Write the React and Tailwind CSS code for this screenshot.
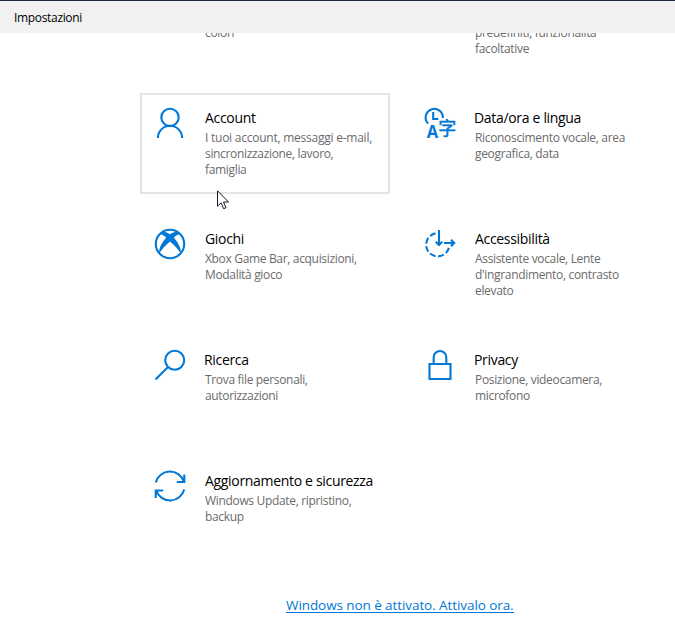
const stroke = { fill: 'none', stroke: '#0078d7', strokeWidth: 2.1 };

const AccountIcon = () => (
  <svg viewBox="0 0 32 32" className="size-8" {...stroke}>
    <circle cx="16" cy="10.4" r="8.7" />
    <path d="M3.900 31a12.100 12.200 0 0 1 24.200 0" />
  </svg>
);

const TimeLanguageIcon = () => (
  <svg viewBox="0 0 32 32" className="size-8 overflow-visible" {...stroke}>
    <path d="M4.200 16.600A8.600 8.600 0 1 1 18.800 11.200" />
    <path d="M9.200 5v7h5.200" />
    <g fill="#0078d7">
      <text x="2.800" y="31" fontSize="18.500" textLength="11.400" lengthAdjust="spacingAndGlyphs" stroke="none" className="font-['Open_Sans',sans-serif] font-bold">A</text>
      <text x="14.200" y="28.300" fontSize="18" strokeWidth="0.500" className="font-['Noto_Sans_CJK_SC',sans-serif] font-normal">字</text>
    </g>
  </svg>
);

const XboxIcon = () => (
  <svg viewBox="0 0 32 32" className="size-8" {...stroke}>
    <circle cx="16" cy="16" r="14.200" />
    <path
      fill="#0078d7"
      stroke="none"
      d="M7 4.200C10 3.200 13.500 4.600 16 6.200C18.500 4.600 22 3.200 25 4.200L26.500 6.200C24.500 5.800 22 7.200 19.800 9.500C23.400 13.600 27.500 20 26.800 25.500C24.500 21.500 20 16.800 16 13.500C12 16.800 7.500 21.500 5.200 25.500C4.500 20 8.600 13.600 12.200 9.500C10 7.200 7.500 5.800 5.500 6.200Z"
    />
  </svg>
);

const EaseIcon = () => (
  <svg viewBox="0 0 32 32" className="size-8" {...stroke}>
    <path d="M11.500 5.400A11.600 11.600 0 1 0 25 19.500" strokeDasharray="6 2.600" />
    <path d="M15 2v15M11.800 13.800l3.200 3.200 3.200-3.200M20 15h10M27 11.800 30.200 15 27 18.200" />
  </svg>
);

const SearchIcon = () => (
  <svg viewBox="0 0 32 32" className="size-8" {...stroke}>
    <circle cx="20.700" cy="11.300" r="9.500" />
    <path d="M14 18 1.500 30.500" />
  </svg>
);

const LockIcon = () => (
  <svg viewBox="0 0 32 32" className="size-8" {...stroke}>
    <path d="M5.500 15h21v15h-21zM9.700 15V8.200a6.300 6.200 0 0 1 12.600 0V15" />
  </svg>
);

const SyncIcon = () => (
  <svg viewBox="0 0 32 32" className="size-8" {...stroke}>
    <path d="M1.800 12.500A14.600 14.600 0 0 1 29.800 11.500M30.300 4.500V12h-7.500M30.200 19.500A14.600 14.600 0 0 1 2.200 20.500M1.700 28v-7.500h7.500" />
  </svg>
);

const items = [
  { title: 'Account', Icon: AccountIcon, active: true, lines: ['I tuoi account, messaggi e-mail,', 'sincronizzazione, lavoro,', 'famiglia'] },
  { title: 'Data/ora e lingua', Icon: TimeLanguageIcon, nudge: true, lines: ['Riconoscimento vocale, area', 'geografica, data'] },
  { title: 'Giochi', Icon: XboxIcon, lines: ['Xbox Game Bar, acquisizioni,', 'Modalità gioco'] },
  { title: 'Accessibilità', Icon: EaseIcon, lines: ['Assistente vocale, Lente', "d'ingrandimento, contrasto", 'elevato'] },
  { title: 'Ricerca', Icon: SearchIcon, nudge: true, lines: ['Trova file personali,', 'autorizzazioni'] },
  { title: 'Privacy', Icon: LockIcon, nudge: true, lines: ['Posizione, videocamera,', 'microfono'] },
  { title: 'Aggiornamento e sicurezza', Icon: SyncIcon, lines: ['Windows Update, ripristino,', 'backup'] },
];

function Line({ children }) {
  const tracking = children.length > 30 ? 'tracking-[-0.24px]' : 'tracking-[-0.33px]';
  return <span className={`block text-[12px] leading-4 text-[#6b6b6b] ${tracking}`}>{children}</span>;
}

function Category({ title, Icon, lines, active, nudge }) {
  return (
    <a className={`flex h-[101px] w-[250px] border-2 pt-3 pl-3 ${active ? 'border-[#e5e5e5]' : 'border-transparent'}`}>
      <span className="size-8 shrink-0"><Icon /></span>
      <span className="ml-[19px] block pt-px whitespace-nowrap">
        <span className={`mb-0.5 block text-[14px] leading-5 tracking-[-0.32px] text-black ${nudge ? '-ml-px' : ''}`}>{title}</span>
        {lines.map((line) => <Line key={line}>{line}</Line>)}
      </span>
    </a>
  );
}

export default function App() {
  return (
    <div className="relative h-[632px] w-[675px] overflow-hidden bg-white font-['Open_Sans','Noto_Sans',sans-serif]">
      <header className="flex h-[33px] items-center border-t border-[#1f2b40] bg-[#f1f1f1] pt-0.5 pl-3.5 text-[12px] tracking-[-0.33px] text-black">
        Impostazioni
      </header>
      <main className="h-[599px] overflow-hidden">
        <div className="-mt-2 ml-[140px] grid h-[68px] grid-cols-[250px_250px] gap-5 whitespace-nowrap">
          <div className="pl-[65px]">
            <Line>colori</Line>
          </div>
          <div className="pl-[65px]">
            <Line>predefiniti, funzionalità</Line>
            <Line>facoltative</Line>
          </div>
        </div>
        <div className="ml-[140px] grid grid-cols-[250px_250px] gap-5">
          {items.map((item) => <Category key={item.title} {...item} />)}
        </div>
        <div className="mt-[41px] ml-[286px] flex">
          <a className="block border-b border-[#0078d7] text-[13.500px] leading-[14px] tracking-[-0.080px] whitespace-nowrap text-[#0078d7]">
            Windows non è attivato. Attivalo ora.
          </a>
        </div>
      </main>
      <svg viewBox="0 0 13 20" className="absolute top-[190px] left-[217px] h-5 w-[13px]">
        <path d="M.500.800v15.400l3.600-3.400 2.500 5.900 2.400-1-2.500-5.700h5z" fill="#fff" stroke="#111827" />
      </svg>
    </div>
  );
}
